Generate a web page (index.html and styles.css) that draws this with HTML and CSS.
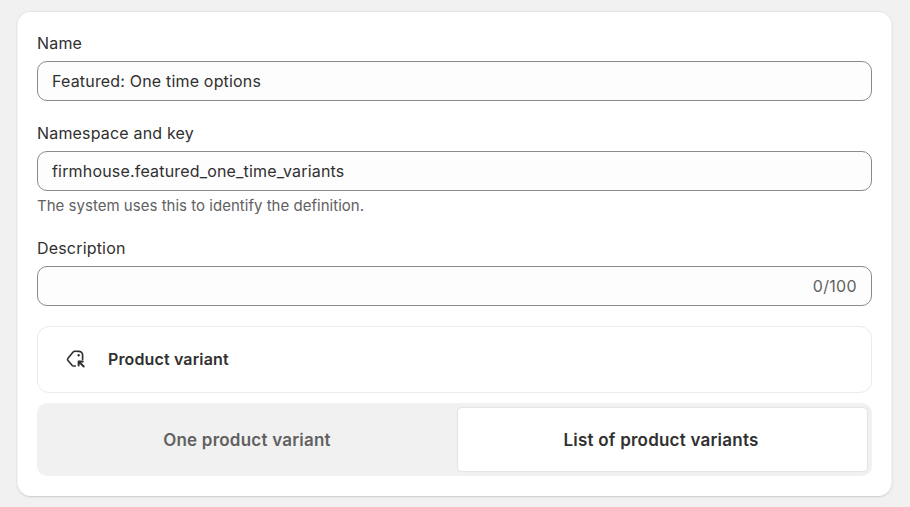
FILE: index.html
```html
<!DOCTYPE html>
<html lang="en">
<head>
<meta charset="utf-8">
<title>Metafield definition</title>
<link rel="stylesheet" href="styles.css">
</head>
<body>
<main class="card">
  <div class="field">
    <label class="label">Name</label>
    <div class="input"><span>Featured: One time options</span></div>
  </div>
  <div class="field">
    <label class="label">Namespace and key</label>
    <div class="input"><span>firmhouse.featured_one_time_variants</span></div>
    <p class="help">The system uses this to identify the definition.</p>
  </div>
  <div class="field">
    <label class="label">Description</label>
    <div class="input input-count"><span class="count">0/100</span></div>
  </div>
  <div class="type">
    <svg class="type-icon" width="22" height="22" viewBox="0 0 20 20" fill="none" stroke="#303030" stroke-width="1.5" stroke-linecap="round" stroke-linejoin="round">
      <path d="M9.4 16.4 H7.8 a1.6 1.6 0 0 1 -1.2 -.5 L2.7 11.4 a1.5 1.5 0 0 1 0 -2 L7.4 3.7 a2 2 0 0 1 1.5 -.7 H12.6 a3.4 3.4 0 0 1 3.4 3.4 V10.4"/>
      <circle cx="12.4" cy="6.6" r=".6" fill="#303030" stroke-width="1"/>
      <path d="M12.4 12.2 L17 16.8 M12.4 12.2 H16.2 M12.4 12.2 V16" stroke-width="1.8"/>
    </svg>
    <span class="type-name">Product variant</span>
  </div>
  <div class="segment">
    <div class="option">One product variant</div>
    <div class="option option-active">List of product variants</div>
  </div>
</main>
</body>
</html>
```
FILE: styles.css
```css
* { box-sizing: border-box; }
html, body { margin: 0; }
body {
  background: #f1f1f1;
  padding: 11px 18px 11px 17px;
  font-family: Inter, "Liberation Sans", sans-serif;
  font-size: 16px;
  line-height: 24px;
  letter-spacing: .18px;
  color: #303030;
}
.card {
  display: flex;
  flex-direction: column;
  gap: 20px;
  height: 485px;
  padding: 20px;
  background: #fff;
  border-radius: 14px;
  box-shadow: 0 1px 2px rgba(0, 0, 0, .16), inset 0 1px 0 #e6e6e6, inset 1px 0 0 #f3f3f3, inset -1px 0 0 #f3f3f3;
}
.field { display: flex; flex-direction: column; }
.label { display: block; margin-bottom: 6px; }
.input {
  display: flex;
  align-items: center;
  height: 40px;
  padding: 0 14px;
  background: #fdfdfd;
  border: 1px solid #8a8a8a;
  border-radius: 10px;
}
.input-count { justify-content: flex-end; }
.count { color: #616161; letter-spacing: .35px; }
.help {
  margin: 4px 0 -1px;
  font-size: 15px;
  line-height: 22px;
  letter-spacing: .02px;
  color: #616161;
}
.type {
  display: flex;
  align-items: center;
  gap: 21px;
  height: 67px;
  padding: 0 0 2px 27px;
  border: 1px solid #ebebeb;
  border-radius: 12px;
}
.type-icon { flex: none; }
.type-name { font-weight: 580; letter-spacing: .14px; }
.segment {
  display: grid;
  grid-template-columns: 415px 409px;
  gap: 1px;
  height: 73px;
  margin-top: -10px;
  padding: 5px;
  background: #f1f1f1;
  border-radius: 10px;
}
.option {
  display: flex;
  align-items: center;
  justify-content: center;
  padding-right: 5px;
  font-size: 17px;
  font-weight: 580;
  letter-spacing: .22px;
  color: #616161;
}
.option-active {
  padding-right: 3px;
  background: #fff;
  color: #303030;
  border-radius: 4px;
  box-shadow: 0 0 2px rgba(0, 0, 0, .18);
}
```
